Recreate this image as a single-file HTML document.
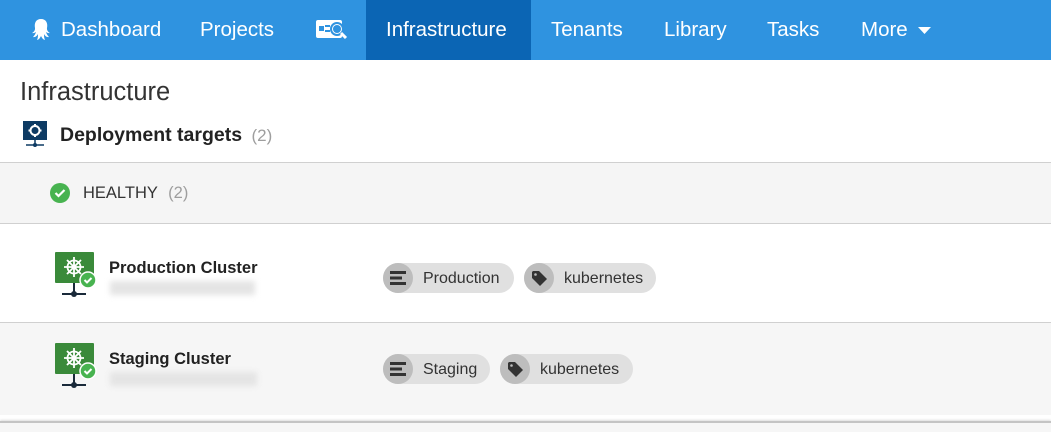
<!DOCTYPE html>
<html><head><meta charset="utf-8"><style>
*{margin:0;padding:0;box-sizing:border-box}
body{width:1051px;height:432px;overflow:hidden;background:#fff;font-family:"Liberation Sans",Roboto,sans-serif;color:#333;position:relative}
.a{position:absolute;white-space:nowrap}
.nav{position:absolute;left:0;top:0;width:1051px;height:60px;background:#2f93e0}
.nav .t{position:absolute;top:18px;color:#fff;font-size:20.5px}
.act{position:absolute;left:366px;top:0;width:165px;height:60px;background:#0b65b4}
.chip{position:absolute;height:30px;border-radius:15px;background:#e0e0e0;font-size:16px;color:#333;line-height:30px}
.chip .ic{position:absolute;left:0;top:0;width:30px;height:30px;border-radius:15px;background:#bdbdbd}
.blur{position:absolute;height:14px;background:#e4e4e4;filter:blur(3px)}
</style></head><body>
<div class="nav">
<div class="act"></div>
<svg class="a" style="left:29px;top:18px" width="24" height="24" viewBox="0 0 24 24"><path fill="#fff" d="M12 1C7 1 5 5 6 10c.3 2-1 4-3 5 2 .5 3-.5 4-1-.5 2-2 4-3 5 2 .5 4-1 5-3 0 2 0 4-1 6 2-.5 3-2 4-4 1 2 2 3.5 4 4-1-2-1-4-1-6 1 2 3 3.5 5 3-1-1-2.5-3-3-5 1 .5 2 1.5 4 1-2-1-3.3-3-3-5 1-5-1-9-6-9z"/></svg>
<div class="t" style="left:61px">Dashboard</div>
<div class="t" style="left:200px">Projects</div>
<svg class="a" style="left:316px;top:19px" width="32" height="22" viewBox="0 0 32 22"><rect x="0" y="1" width="26" height="18" rx="2" fill="#fff"/><rect x="3" y="7" width="5" height="5" fill="#2f93e0"/><rect x="9" y="6" width="5" height="2" fill="#2f93e0"/><rect x="9" y="11" width="5" height="2" fill="#2f93e0"/><circle cx="21" cy="10" r="6" fill="#fff" stroke="#2f93e0" stroke-width="2"/><circle cx="21" cy="10" r="4" fill="#2f93e0"/><line x1="25" y1="14" x2="30" y2="19" stroke="#fff" stroke-width="3"/></svg>
<div class="t" style="left:386px">Infrastructure</div>
<div class="t" style="left:551px">Tenants</div>
<div class="t" style="left:664px">Library</div>
<div class="t" style="left:767px">Tasks</div>
<div class="t" style="left:861px">More</div>
<svg class="a" style="left:918px;top:27px" width="13" height="7"><path d="M0 0h13L6.5 7z" fill="#fff"/></svg>
</div>
<div class="a" style="left:20px;top:78px;font-size:25.5px;color:#333">Infrastructure</div>
<svg class="a" style="left:23px;top:121px" width="24" height="27" viewBox="0 0 24 27"><rect x="0" y="0" width="24" height="19" fill="#0d3a63"/><circle cx="12" cy="9.5" r="4.5" fill="none" stroke="#fff" stroke-width="2"/><path d="M12 3v3M12 13v3M5.5 9.5h3M15.5 9.5h3" stroke="#fff" stroke-width="2"/><path d="M12 19v5M3 24h18" stroke="#0d3a63" stroke-width="1.5"/><circle cx="12" cy="24" r="2" fill="#0d3a63"/></svg>
<div class="a" style="left:60px;top:124px;font-size:19.5px;font-weight:bold;color:#222">Deployment targets <span style="font-weight:normal;color:#9e9e9e;font-size:17px;margin-left:4px">(2)</span></div>
<div class="a" style="left:0;top:162px;width:1051px;height:62px;background:#f5f5f5;border-top:1px solid #d0d0d0;border-bottom:1px solid #d0d0d0"></div>
<svg class="a" style="left:50px;top:183px" width="20" height="20"><circle cx="10" cy="10" r="10" fill="#48b350"/><path d="M5.5 10l3 3 6-6" stroke="#fff" stroke-width="2.2" fill="none"/></svg>
<div class="a" style="left:83px;top:184px;font-size:16.5px;color:#333">HEALTHY <span style="color:#9e9e9e;margin-left:6px">(2)</span></div>
<div class="a" style="left:0;top:322px;width:1051px;height:93px;background:#f6f6f6;border-top:1px solid #d0d0d0"></div>
<div class="a" style="left:0;top:421px;width:1051px;height:11px;background:#f6f6f6;border-top:2px solid #c4c4c4;box-shadow:0 -1px 2px #ddd"></div>

<svg class="a" style="left:55px;top:252px" width="42" height="48" viewBox="0 0 42 48"><rect x="0" y="0" width="39" height="31" rx="1" fill="#3a8a3a"/><g stroke="#fff" stroke-width="1.8" fill="none"><circle cx="19" cy="15" r="6.5"/><circle cx="19" cy="15" r="1.5"/><path d="M19 5v20M9 15h20M12 8l14 14M26 8L12 22"/></g><path d="M19 31v11M7 42h24" stroke="#1a2a3a" stroke-width="2"/><circle cx="19" cy="42" r="3" fill="#1a2a3a"/><circle cx="33" cy="28" r="8" fill="#48b350" stroke="#fff" stroke-width="1.5"/><path d="M29.5 28l2.5 2.5 4.5-4.5" stroke="#fff" stroke-width="2" fill="none"/></svg>
<div class="a" style="left:109px;top:259px;font-size:16.5px;font-weight:bold;color:#222">Production Cluster</div>
<div class="blur" style="left:110px;top:281px;width:145px"></div>
<div class="chip" style="left:383px;top:263px;width:131px"><div class="ic"></div><span style="position:absolute;left:40px;top:1px">Production</span></div>
<div class="chip" style="left:524px;top:263px;width:132px"><div class="ic"></div><span style="position:absolute;left:40px;top:1px">kubernetes</span></div>
<svg class="a" style="left:390px;top:271px" width="16" height="14"><rect x="0" y="0" width="16" height="3" fill="#333"/><rect x="0" y="5.5" width="12" height="3" fill="#333"/><rect x="0" y="11" width="16" height="3" fill="#333"/></svg>
<svg class="a" style="left:531px;top:270px" width="16" height="16"><path d="M1 2v6l8 8 7-7-8-8H2z" fill="#333"/><circle cx="4.5" cy="4.5" r="1.3" fill="#bdbdbd"/></svg>

<svg class="a" style="left:55px;top:343px" width="42" height="48" viewBox="0 0 42 48"><rect x="0" y="0" width="39" height="31" rx="1" fill="#3a8a3a"/><g stroke="#fff" stroke-width="1.8" fill="none"><circle cx="19" cy="15" r="6.5"/><circle cx="19" cy="15" r="1.5"/><path d="M19 5v20M9 15h20M12 8l14 14M26 8L12 22"/></g><path d="M19 31v11M7 42h24" stroke="#1a2a3a" stroke-width="2"/><circle cx="19" cy="42" r="3" fill="#1a2a3a"/><circle cx="33" cy="28" r="8" fill="#48b350" stroke="#fff" stroke-width="1.5"/><path d="M29.5 28l2.5 2.5 4.5-4.5" stroke="#fff" stroke-width="2" fill="none"/></svg>
<div class="a" style="left:109px;top:350px;font-size:16.5px;font-weight:bold;color:#222">Staging Cluster</div>
<div class="blur" style="left:110px;top:372px;width:147px"></div>
<div class="chip" style="left:383px;top:354px;width:107px"><div class="ic"></div><span style="position:absolute;left:40px;top:1px">Staging</span></div>
<div class="chip" style="left:500px;top:354px;width:133px"><div class="ic"></div><span style="position:absolute;left:40px;top:1px">kubernetes</span></div>
<svg class="a" style="left:390px;top:362px" width="16" height="14"><rect x="0" y="0" width="16" height="3" fill="#333"/><rect x="0" y="5.5" width="12" height="3" fill="#333"/><rect x="0" y="11" width="16" height="3" fill="#333"/></svg>
<svg class="a" style="left:507px;top:361px" width="16" height="16"><path d="M1 2v6l8 8 7-7-8-8H2z" fill="#333"/><circle cx="4.5" cy="4.5" r="1.3" fill="#bdbdbd"/></svg>
</body></html>
